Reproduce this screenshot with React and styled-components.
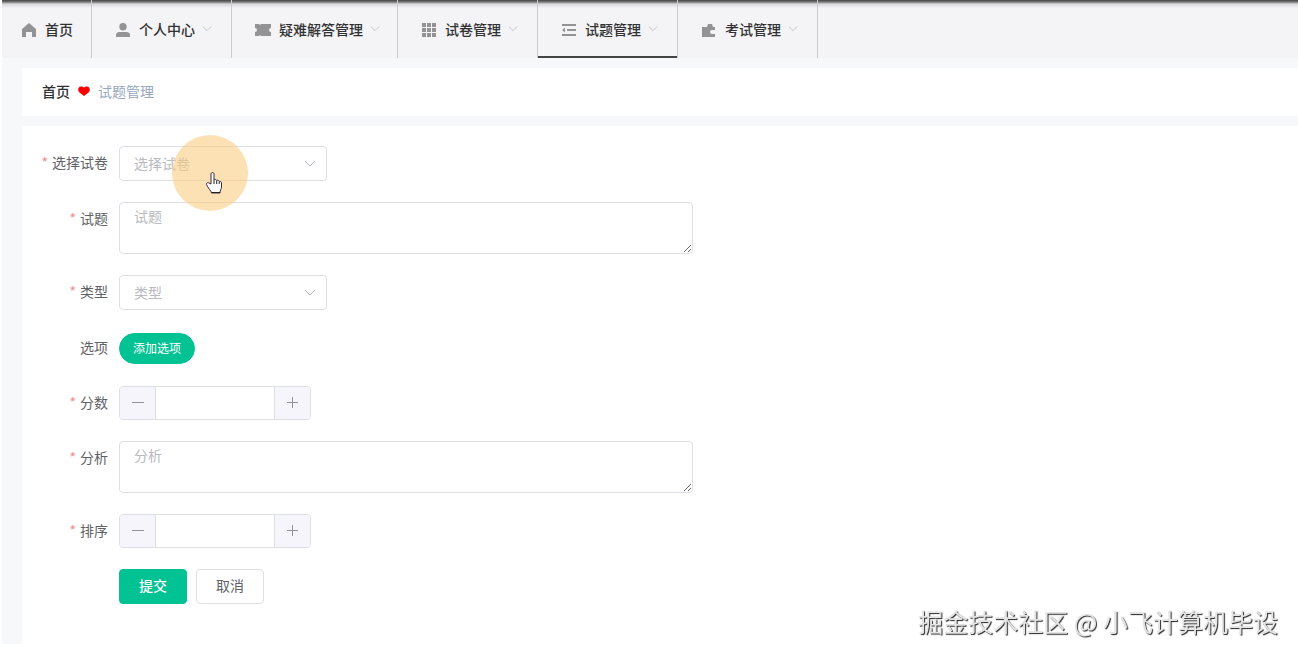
import React from 'react';
import styled, { createGlobalStyle } from 'styled-components';

const GlobalStyle = createGlobalStyle`
  body {
    margin: 0;
    background: #fff;
  }
  *, *::before, *::after {
    box-sizing: border-box;
  }
  body, button, input, select, textarea {
    font-family: "Noto Sans CJK SC", sans-serif;
    font-size: 14px;
  }
`

const Page = styled.div`
  margin-left: 2px;
  min-height: 644px;
  background: #f6f8fa;
`

const Nav = styled.nav`
  display: flex;
  height: 58px;
  background: linear-gradient(#444 0, #777 2px, #d8d8da 4px, #f4f4f6 8px);
`

const NavItem = styled.a`
  display: flex;
  align-items: center;
  flex: 0 0 ${props => props.$width || 140}px;
  padding-left: ${props => props.$width === 90 ? 19 : 23}px;
  border-right: 1px solid #ccc;
  box-shadow: ${props => props.$active ? 'inset 0 -2px #444' : 'none'};
  color: #303133;
  font-weight: 500;
  line-height: 20px;
  text-decoration: none;
  > svg:first-child {
    margin: 2px 8px 0 0;
  }
  > svg:last-child {
    margin-left: 7px;
  }
`

const Icon = styled.svg`
  display: block;
  flex: none;
  width: 16px;
  height: 16px;
  fill: #939396;
`

const Arrow = styled.svg`
  display: block;
  flex: none;
  width: ${props => props.$size || 10}px;
  height: ${props => props.$size || 10}px;
  fill: none;
  stroke: #b8bbc2;
`

const Main = styled.main`
  padding: 10px 0 0 20px;
`

const Breadcrumb = styled.div`
  display: flex;
  align-items: center;
  gap: 8px;
  height: 48px;
  padding: 0 0 3px 20px;
  background: #fff;
  color: #97a8be;
  line-height: 20px;
  a {
    color: #303133;
    font-weight: 500;
    text-decoration: none;
  }
  svg {
    width: 12px;
    height: 12px;
    fill: #f00;
  }
`

const Form = styled.form`
  display: flex;
  flex-direction: column;
  gap: 21px;
  margin-top: 10px;
  padding: 20px 20px 40px 0;
  background: #fff;
`

const Row = styled.div`
  display: flex;
  align-items: flex-start;
`

const Label = styled.label`
  width: 86px;
  margin-right: 11px;
  color: #606266;
  line-height: 32px;
  text-align: right;
  &::before {
    content: ${props => props.$required ? '"*"' : 'none'};
    margin-right: 4px;
    color: #f78989;
  }
`

const SelectBox = styled.div`
  display: grid;
  width: 208px;
  select, svg {
    grid-area: 1 / 1;
  }
  svg {
    align-self: center;
    justify-self: end;
    margin-right: 11px;
    pointer-events: none;
  }
`

const Select = styled.select`
  appearance: none;
  width: 100%;
  height: 35px;
  padding: 0 30px 2px 14px;
  border: 1px solid #dcdfe6;
  border-radius: 4px;
  background: #fff;
  color: #b8bac0;
`

const TextArea = styled.textarea`
  display: block;
  flex: 0 1 574px;
  height: 52px;
  padding: 3px 14px;
  border: 1px solid #dcdfe6;
  border-radius: 4px;
  line-height: 20px;
  resize: vertical;
  &::placeholder {
    color: #b8bac0;
  }
`

const NumberBox = styled.div`
  display: flex;
  width: 192px;
  height: 34px;
  overflow: hidden;
  border: 1px solid #dcdfe6;
  border-radius: 4px;
  input {
    flex: 1;
    min-width: 0;
    border: 0;
    text-align: center;
  }
`

const StepButton = styled.button`
  display: flex;
  align-items: center;
  justify-content: center;
  width: 36px;
  padding: 0;
  border: 0 solid #dcdfe6;
  background: #f5f5fb;
  &:first-child {
    border-right-width: 1px;
  }
  &:last-child {
    border-left-width: 1px;
  }
  svg {
    width: 12px;
    height: 12px;
    stroke: #909399;
  }
`

const Button = styled.button`
  height: 35px;
  padding: 0 19px 3px;
  border: 1px solid ${props => props.$primary ? '#00c292' : '#dcdfe6'};
  border-radius: 4px;
  background: ${props => props.$primary ? '#00c292' : '#fff'};
  color: ${props => props.$primary ? '#fff' : '#606266'};
  font-weight: ${props => props.$primary ? 500 : 400};
`

const AddButton = styled(Button)`
  height: 31px;
  margin: 2px 0 1px;
  padding: 0 13px 2px;
  border-radius: 16px;
  font-size: 12px;
  font-weight: 400;
`

const Actions = styled.div`
  display: flex;
  gap: 9px;
  padding-left: 97px;
`

const Pointer = styled.div`
  position: absolute;
  top: 135px;
  left: 172px;
  width: 76px;
  height: 76px;
  border-radius: 50%;
  background: rgba(250, 205, 130, .6);
  pointer-events: none;
  svg {
    display: block;
    width: 18px;
    height: 24px;
    margin: 36px 0 0 33px;
  }
`

const Watermark = styled.div`
  position: fixed;
  right: 20px;
  bottom: 17px;
  color: #e4e4e4;
  font-size: 25px;
  line-height: 36px;
  text-shadow: 1px 1px 1px #222;
`

const icons = {
  home: <path d="M8 1 1 7v8h4v-5h6v5h4V7z" />,
  user: <path d="M8 1a3.7 3.7 0 1 1 0 7.4A3.7 3.7 0 0 1 8 1zM1 15v-2c0-2 1.5-3 3.5-3h7c2 0 3.5 1 3.5 3v2z" />,
  ticket: <path d="M0 2h4l1 1 1-1h10v4a2 2 0 0 0 0 4v4H6l-1-1-1 1H0v-4a2 2 0 0 0 0-4z" />,
  grid: <path d="M1 1h4v4H1zM6 1h4v4H6zM11 1h4v4h-4zM1 6h4v4H1zM6 6h4v4H6zM11 6h4v4h-4zM1 11h4v4H1zM6 11h4v4H6zM11 11h4v4h-4z" />,
  fold: <path d="M1 2h14v2H1zM6 7h9v2H6zM1 12h14v2H1zM1 8l3-2.5v5z" />,
  exam: <path d="M1 5h5l1-3h4l1 3h2v3h-3a2 2 0 0 0 0 4h3v3H1z" />
}

const menu = [
  { name: '首页', icon: 'home', width: 90 },
  { name: '个人中心', icon: 'user' },
  { name: '疑难解答管理', icon: 'ticket', width: 166 },
  { name: '试卷管理', icon: 'grid' },
  { name: '试题管理', icon: 'fold', active: true },
  { name: '考试管理', icon: 'exam' }
]

const ArrowDown = ({ size }) => (
  <Arrow viewBox="0 0 12 12" $size={size}><path d="m1 3 5 5 5-5" /></Arrow>
)

const SelectField = ({ id, label }) => (
  <Row>
    <Label htmlFor={id} $required>{label}</Label>
    <SelectBox>
      <Select id={id} defaultValue="">
        <option value="">{label}</option>
      </Select>
      <ArrowDown size={12} />
    </SelectBox>
  </Row>
)

const TextField = ({ id, label }) => (
  <Row>
    <Label htmlFor={id} $required>{label}</Label>
    <TextArea id={id} placeholder={label} />
  </Row>
)

const NumberField = ({ id, label }) => (
  <Row>
    <Label htmlFor={id} $required>{label}</Label>
    <NumberBox>
      <StepButton type="button" aria-label="减少">
        <svg viewBox="0 0 12 12"><path d="M0 5.5h12" /></svg>
      </StepButton>
      <input id={id} type="text" inputMode="numeric" />
      <StepButton type="button" aria-label="增加">
        <svg viewBox="0 0 12 12"><path d="M0 5.5h11M5.5 0v11" /></svg>
      </StepButton>
    </NumberBox>
  </Row>
)

export default function App () {
  return (
    <>
      <GlobalStyle />
      <Page>
        <Nav>
          {menu.map(item => (
            <NavItem key={item.name} href="#" $width={item.width} $active={item.active}>
              <Icon viewBox="0 0 16 16">{icons[item.icon]}</Icon>
              <span>{item.name}</span>
              {item.icon !== 'home' && <ArrowDown />}
            </NavItem>
          ))}
        </Nav>
        <Main>
          <Breadcrumb>
            <a href="#">首页</a>
            <svg viewBox="0 0 12 12"><path d="M6 11 1.500 7.500C-.8 5.500 0 1.500 3 1.500c1.500 0 2.500.5 3 1 .5-.5 1.500-1 3-1 3 0 3.800 4 1.500 6z" /></svg>
            <span>试题管理</span>
          </Breadcrumb>
          <Form>
            <SelectField id="paper" label="选择试卷" />
            <TextField id="question" label="试题" />
            <SelectField id="type" label="类型" />
            <Row>
              <Label htmlFor="options">选项</Label>
              <AddButton id="options" type="button" $primary>添加选项</AddButton>
            </Row>
            <NumberField id="score" label="分数" />
            <TextField id="analysis" label="分析" />
            <NumberField id="sort" label="排序" />
            <Actions>
              <Button type="button" $primary>提交</Button>
              <Button type="button">取消</Button>
            </Actions>
          </Form>
        </Main>
      </Page>
      <Pointer>
        <svg viewBox="0 0 18 24">
          <path
            d="M6 13V3c0-2 3-2 3 0v6c1-1 2.5-.5 2.7.5 1-.7 2.3 0 2.5 1 1.2-.5 2.3.3 2.3 1.5v4c0 2-1.5 3-1.5 6H6.5c0-2-4-5.5-5-8.5-.5-1.5 1.5-2.5 2.5-1.5z"
            fill="#fff"
            stroke="#3a2a40"
          />
          <path d="M9 9v4M11.7 10v3M14.2 11v2M6.5 21.5H15" fill="none" stroke="#222" />
        </svg>
      </Pointer>
      <Watermark>掘金技术社区 @ 小飞计算机毕设</Watermark>
    </>
  )
}
